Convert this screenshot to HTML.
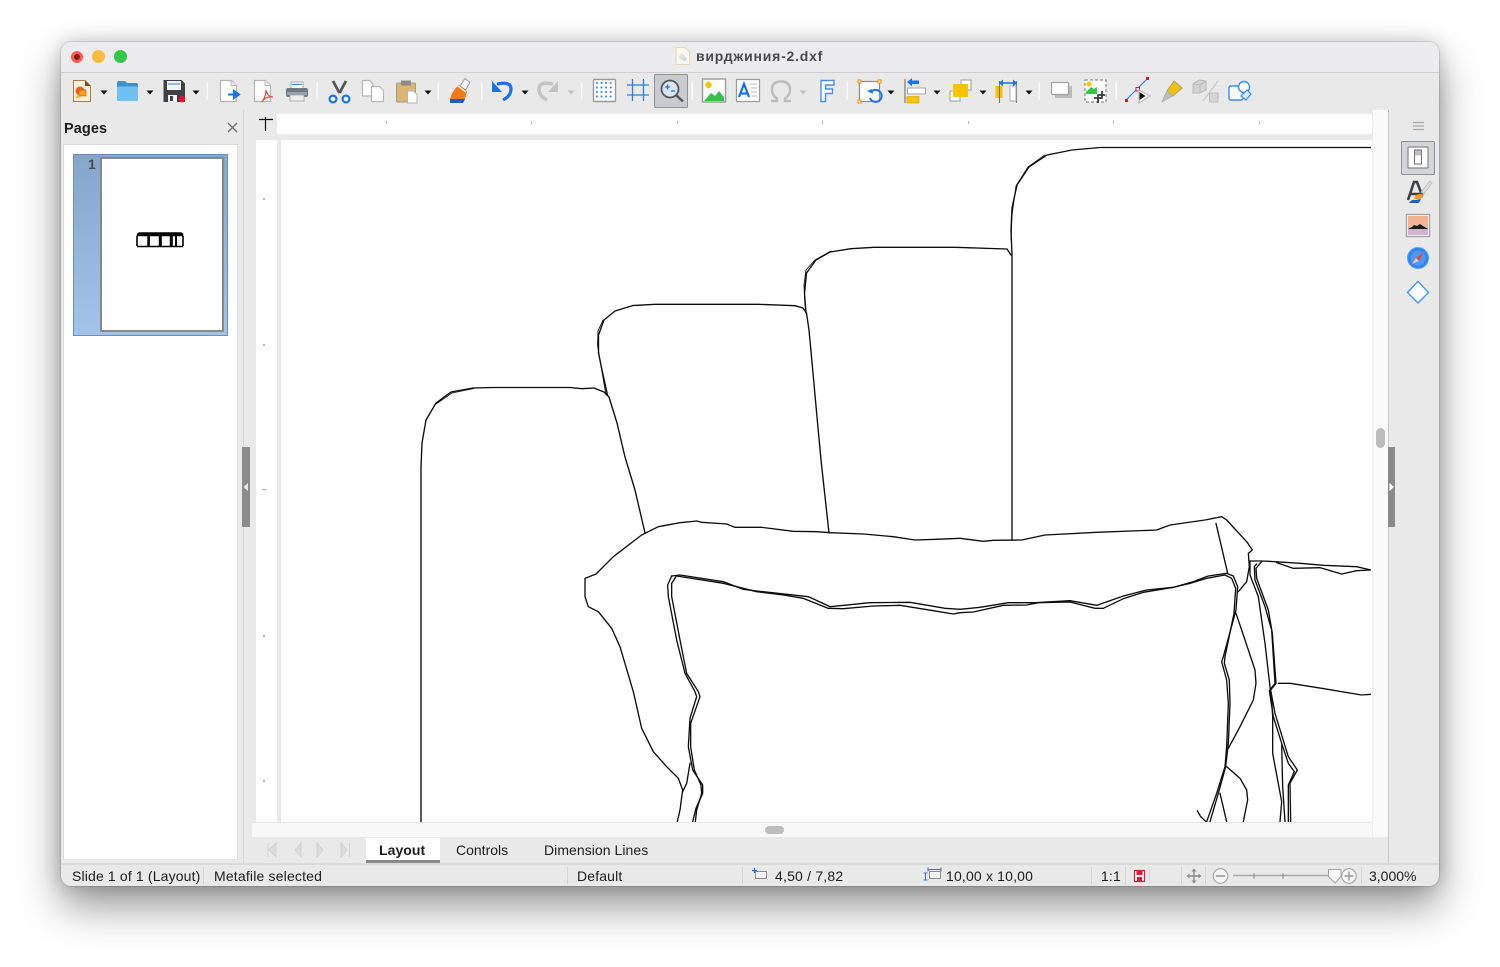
<!DOCTYPE html>
<html lang="ru"><head><meta charset="utf-8"><title>вирджиния-2.dxf</title>
<style>
html,body{margin:0;padding:0;width:1500px;height:967px;background:#fff;overflow:hidden}
body{position:relative;font-family:"Liberation Sans",sans-serif;color:#1c1c1c}
.a{position:absolute}
.t{position:absolute;white-space:nowrap;font-size:14px;line-height:16px;color:#1c1c1c;letter-spacing:.15px}
#win{position:absolute;left:61px;top:42px;width:1378px;height:844px;border-radius:10px;background:#e9e9e9;box-shadow:0 20px 42px rgba(0,0,0,.42),0 0 18px rgba(0,0,0,.18),0 0 0 1px rgba(0,0,0,.1)}
svg{position:absolute;left:0;top:0}
</style></head><body>
<div id="win"></div>
<div class="a" style="left:61px;top:42px;width:1378px;height:30px;background:#ececee;border-radius:10px 10px 0 0"></div>
<div class="a" style="left:61px;top:72px;width:1378px;height:1px;background:#d0d0d0"></div>
<div class="a" style="left:71px;top:51px;width:12px;height:12px;border-radius:50%;background:#fc5c57"></div>
<div class="a" style="left:74px;top:54px;width:6px;height:6px;border-radius:50%;background:#8a1a14"></div>
<div class="a" style="left:92px;top:50px;width:13px;height:13px;border-radius:50%;background:#fdbb40"></div>
<div class="a" style="left:114px;top:50px;width:13px;height:13px;border-radius:50%;background:#33c748"></div>
<div class="t" style="left:696px;top:48px;font-weight:bold;color:#4a4a4a;letter-spacing:.78px">вирджиния-2.dxf</div>

<!-- left panel -->
<div class="a" style="left:243px;top:110px;width:1px;height:754px;background:#d4d4d4"></div>
<div class="t" style="left:64px;top:121px;font-weight:bold;font-size:14.5px;letter-spacing:.1px">Pages</div>
<div class="a" style="left:63px;top:144px;width:175px;height:716px;background:#fff;border:1px solid #dcdcdc;border-bottom:1px solid #e4e4e4;box-sizing:border-box"></div>
<div class="a" style="left:73px;top:154px;width:155px;height:182px;box-sizing:border-box;border:1px solid #6f8fb8;background:linear-gradient(#86a5cb,#a4c3e9)"></div>
<div class="a" style="left:100px;top:157px;width:124px;height:175px;box-sizing:border-box;background:#fff;border:2px solid #86888a;border-radius:1px"></div>
<div class="t" style="left:88px;top:156px;font-weight:bold;color:#454a52">1</div>

<!-- canvas area -->
<div class="a" style="left:277px;top:114px;width:1095px;height:20px;background:#fff"></div>
<div class="a" style="left:256px;top:140px;width:21px;height:682px;background:#fff"></div>
<div class="a" style="left:281px;top:140px;width:1091px;height:682px;background:#fff"></div>
<div class="a" style="left:1372px;top:110px;width:16px;height:727px;background:#fafafa;border-left:1px solid #eee;box-sizing:border-box"></div>
<div class="a" style="left:252px;top:822px;width:1120px;height:15px;background:#f8f8f8;border-top:1px solid #e6e6e6;box-sizing:border-box"></div>
<div class="a" style="left:1376px;top:428px;width:9px;height:20px;border-radius:4.5px;background:#bdbdbd"></div>
<div class="a" style="left:765px;top:826px;width:19px;height:8px;border-radius:4px;background:#bdbdbd"></div>
<div class="a" style="left:1388px;top:110px;width:1px;height:754px;background:#c9c9c9"></div>
<div class="a" style="left:242px;top:447px;width:8px;height:80px;background:#8b8b8b"></div>
<div class="a" style="left:1388px;top:447px;width:7px;height:80px;background:#8b8b8b"></div>

<!-- tabs + status -->
<div class="a" style="left:366px;top:838px;width:74px;height:25px;background:#fff;border-bottom:3px solid #8a8a8a;box-sizing:border-box"></div>
<div class="t" style="left:379px;top:842px;font-weight:bold;letter-spacing:.05px">Layout</div>
<div class="t" style="left:456px;top:842px;letter-spacing:0">Controls</div>
<div class="t" style="left:544px;top:842px;letter-spacing:.05px">Dimension Lines</div>
<div class="a" style="left:61px;top:863px;width:1378px;height:2px;background:#dadada"></div>
<div class="t" style="left:72px;top:868px">Slide 1 of 1 (Layout)</div>
<div class="t" style="left:214px;top:868px;letter-spacing:.18px">Metafile selected</div>
<div class="t" style="left:577px;top:868px">Default</div>
<div class="t" style="left:775px;top:868px;letter-spacing:.2px">4,50 / 7,82</div>
<div class="t" style="left:946px;top:868px;letter-spacing:.17px">10,00 x 10,00</div>
<div class="t" style="left:1101px;top:868px">1:1</div>
<div class="t" style="left:1369px;top:868px;letter-spacing:0">3,000%</div>

<!-- drawing -->
<svg width="1500" height="967" viewBox="0 0 1500 967">
<defs><clipPath id="c"><rect x="281" y="140" width="1090" height="682"/></clipPath></defs>
<g clip-path="url(#c)" fill="none" stroke="#0c0c0c" stroke-width="1.35" stroke-linejoin="round" stroke-linecap="round">
<polyline points="421,823 421,467 422,443 426,420 436,403 451,392 473,388 493,387.5 570,387.5 582,388.7 594,388 604,392 609,397 617,423 625,457 635,490 645,533"/>
<polyline points="436,404 452,393 474,388.5" stroke-width=".8"/>
<polyline points="607.5,395 602,370 598.5,353 598.5,335 604,320 615,311 633,305.5 655,304.3 758,304.3 795,305.7 803,308 806.5,313 809,330 813,373 817,417 821,460 829,533"/>
<polyline points="606,395 601,366 597.5,345 598,331 603,320" stroke-width=".9"/>
<polyline points="806,313 804.5,293 806.5,273 816,260 830,252 851,248.7 874,247.3 955,247.3 1007,249 1011,255"/>
<polyline points="805,306 804,285 806,270 815,260 831,251" stroke-width=".9"/>
<polyline points="1012,540 1012,255 1011,230 1012,208 1017,185 1029,167 1047,155 1072,150 1100,147.5 1372,147.5"/>
<polyline points="1011,240 1012,215 1016,186 1028,167 1045,155" stroke-width=".9"/>

<g transform="translate(570 500) scale(.33333)">
<g stroke-width="4">
<polyline points="322,965 330,930 338,870 325,835 290,800 250,755 215,685 190,575 150,440 125,385 85,335 55,320 45,290 45,235 78,222 130,170 215,105 265,80 330,68 380,63 395,67 470,72 495,82 575,82 670,94 740,95 780,98 880,102 970,110 1035,120 1100,118 1170,115"/>
<polyline points="305,228 330,225 460,245 520,268 560,273 715,290 780,320 900,308 1020,307 1125,325 1170,328"/>
<polyline points="320,228 460,250 560,275 640,285 700,295 775,325 820,326 910,318 990,316 1090,332 1150,342 1170,338"/>
<polyline points="305,228 293,255 295,290 320,420 345,520 375,575 380,590 360,655 355,740 368,810 398,855 398,880 378,925 368,965"/>
<polyline points="318,230 305,250 305,290 330,420 350,520 385,575 390,590 362,670 362,740 373,810 393,855 395,880 380,930 376,965"/>
<polyline points="360,790 350,850 338,875"/>
</g></g>

<g transform="translate(960 500) scale(.33333)">
<g stroke-width="4">
<polyline points="0,115 70,124 100,121 185,120 255,105 410,97 590,90 630,75 735,60 785,50 800,60 860,125 877,150 865,160 868,200 860,245 835,275"/>
<polyline points="0,328 60,322 145,308 225,308 330,302 410,316 490,288 560,270 640,262 700,245 745,228 800,220 820,228 833,260 828,330 790,470 785,485 800,540 805,610 800,740 795,800 770,880 740,965"/>
<polyline points="0,338 40,336 130,316 200,315 235,308 330,306 405,325 430,325 490,296 550,277 640,262 690,250 740,235 795,225 815,235 827,265 822,340 795,470 793,490 808,540 810,610 805,730 797,800 775,880 750,965"/>
<polyline points="768,70 803,220"/>
<polyline points="828,340 850,405 885,510 888,550 880,600 840,680 805,745"/>
<polyline points="800,800 840,835 860,870 863,900 850,965"/>
<polyline points="780,880 800,965"/>
<polyline points="712,932 722,950 738,965"/>
<polyline points="870,183 905,183 945,185 1020,190 1090,196 1190,200 1233,210"/>
<polyline points="950,188 1000,205 1080,203 1145,222 1190,212 1233,210"/>
<polyline points="870,183 870,225 895,290 915,430 930,560 935,600 938,650 938,760 965,905 960,965"/>
<polyline points="905,185 888,205 890,235 925,330 937,400 948,550 932,570 945,640 985,770 1012,810 990,850 992,965"/>
<polyline points="890,192 883,200 885,240 915,320 935,390 945,550 928,572 940,650 965,730 985,790 1003,815 985,855 985,965"/>
<polyline points="965,735 968,860 975,965"/>
<polyline points="955,550 990,550 1085,565 1205,585 1233,583"/>
</g></g>
</g>

<!-- thumbnail drawing -->
<g fill="none" stroke="#000" stroke-width="1.6">
<path d="M137 246.500H183M137 246V236M149 246V236M161 246V236M172 246V236M183 246V236"/>
<path d="M137 234.500q1-2 3-2H180q3 0 3 2v1.500H137z" fill="#000" stroke="#000" stroke-width=".6"/>
<path d="M148.500 234V246M160 234V246M171 234V246" stroke-width="2.400"/>
<path d="M176 236V246" stroke-width="2"/>
</g>

<!-- rulers -->
<g fill="#b4b4b4">
<rect x="386" y="121" width="1" height="3"/><rect x="531" y="121" width="1" height="3"/><rect x="677" y="121" width="1" height="3"/><rect x="822" y="121" width="1" height="3"/><rect x="968" y="121" width="1" height="3"/><rect x="1113" y="121" width="1" height="3"/><rect x="1259" y="121" width="1" height="3"/>
<rect x="263" y="198" width="2" height="2"/><rect x="263" y="344" width="2" height="2"/><rect x="262" y="489" width="5" height="1"/><rect x="263" y="635" width="2" height="2"/><rect x="263" y="780" width="2" height="2"/>
</g>
<path d="M259 119.500H273M265.500 117V131" stroke="#111" stroke-width="1.200" fill="none"/>
<path d="M248 483L243.500 487L248 491Z" fill="#e8e8e8"/>
<path d="M1389.500 483L1394 487L1389.500 491Z" fill="#fff"/>
<path d="M228 123L237 132M237 123L228 132" stroke="#6b6b6b" stroke-width="1.300" fill="none"/>

<!-- title doc icon -->
<path d="M676 47.500H685L689.500 52V64.500H676Z" fill="#fbf7ea" stroke="#e4d9b5"/>
<circle cx="682" cy="57" r="3" fill="#dfe3e6"/><circle cx="684.500" cy="59" r="2.200" fill="#c4dcee"/>

<!-- separators -->
<g fill="#f9f9f9">
<rect x="206.500" y="82" width="1.500" height="18"/><rect x="316.500" y="82" width="1.500" height="18"/><rect x="437.500" y="82" width="1.500" height="18"/><rect x="481" y="82" width="1.500" height="18"/><rect x="581" y="82" width="1.500" height="18"/><rect x="691.500" y="82" width="1.500" height="18"/><rect x="846.500" y="82" width="1.500" height="18"/><rect x="1038.500" y="82" width="1.500" height="18"/><rect x="1115.500" y="82" width="1.500" height="18"/>
</g>
<!-- dropdown arrows -->
<g fill="#111">
<path d="M100.500 90.500h7l-3.500 4z"/><path d="M146.500 90.500h7l-3.500 4z"/><path d="M192.500 90.500h7l-3.500 4z"/><path d="M424.500 90.500h7l-3.500 4z"/><path d="M521.500 90.500h7l-3.500 4z"/><path d="M887.500 90.500h7l-3.500 4z"/><path d="M933.500 90.500h7l-3.500 4z"/><path d="M979.500 90.500h7l-3.500 4z"/><path d="M1025.500 90.500h7l-3.500 4z"/>
<path d="M567.500 90.500h7l-3.500 4z" fill="#c4c4c4"/><path d="M799.500 90.500h7l-3.500 4z" fill="#c4c4c4"/>
</g>

<!-- new -->
<path d="M73.500 80.500H85L90.500 86V101.500H73.500Z" fill="#fff0dc" stroke="#a87a4c"/>
<path d="M85 80.500L90.500 86H85Z" fill="#7b4a1e"/>
<circle cx="80" cy="91" r="4.500" fill="#e9601e"/><rect x="79" y="90" width="7" height="6" fill="#f4a21f" stroke="#c55b12" stroke-width=".7"/><path d="M75 98l3-4 3 4z" fill="#f3bd3f"/>
<!-- folder -->
<path d="M117 83q0-2 2-2h6l2 2h9q2 0 2 2v14q0 2-2 2h-17q-2 0-2-2z" fill="#3f8fc8"/><rect x="117" y="86.500" width="21" height="14.500" rx="1.500" fill="#70c0f3"/>
<!-- save -->
<path d="M163.500 80h18l3.500 3.500V102h-21.500z" fill="#3f4246"/><rect x="167" y="81" width="14" height="9" fill="#f4f4f4"/><path d="M168 84h12" stroke="#4f93e0" stroke-width="1.200"/><rect x="168" y="95" width="9" height="7" fill="#f4f4f4"/><rect x="170" y="96" width="3" height="5" fill="#3f4246"/><circle cx="182" cy="99" r="3.200" fill="#e8112d"/>
<!-- export -->
<path d="M220.500 80.500h11l5 5V101.500h-16z" fill="#fff" stroke="#b4b4b4" stroke-width="1.200"/><path d="M231 80.500v5h5.500" fill="#eee" stroke="#b4b4b4"/><path d="M228 94.500h6M234 91l5 3.500-5 3.500z" stroke="#1a73e8" stroke-width="2" fill="#1a73e8"/>
<!-- pdf -->
<path d="M254.500 80.500h11l5 5V101.500h-16z" fill="#fff" stroke="#b4b4b4" stroke-width="1.200"/><path d="M265 80.500v5h5.500" fill="#eee" stroke="#b4b4b4"/><path d="M262 102c3-4 4-8 4-12 1 4 3 7 7 7-4-1-9 1-11 5z" fill="none" stroke="#e0483e" stroke-width="1.200"/>
<!-- print -->
<rect x="291" y="82" width="12" height="7" fill="#fff" stroke="#888" stroke-width=".7"/><rect x="286" y="88" width="22" height="9" rx="2" fill="#6f7a86"/><rect x="287" y="92" width="20" height="3" fill="#9aa4ae"/><rect x="290" y="95" width="14" height="6" fill="#eee" stroke="#999" stroke-width=".7"/><path d="M292 84.500h10" stroke="#3a8ae0" stroke-width="1.200"/>
<!-- cut -->
<path d="M333 81l6.500 12M346 81l-6.500 12" stroke="#53585e" stroke-width="2.800" fill="none"/><circle cx="333" cy="99" r="3.400" fill="#fff" stroke="#1a73e8" stroke-width="2.200"/><circle cx="346" cy="99" r="3.400" fill="#fff" stroke="#1a73e8" stroke-width="2.200"/>
<!-- copy -->
<path d="M362.500 80.500h7l3.500 3.500v12h-10.500z" fill="#fff" stroke="#b5b5b5" stroke-width="1.200"/><path d="M371.500 86.500h8l4 4V101.500h-12z" fill="#fff" stroke="#b5b5b5" stroke-width="1.200"/>
<!-- paste -->
<rect x="396.500" y="83" width="19" height="19" rx="1" fill="#dcb56f" stroke="#a89a80"/><rect x="401" y="80.500" width="10" height="5" fill="#8c8c8c"/><path d="M407.500 91h6l3.500 3.500V103h-9.500z" fill="#fff" stroke="#b5b5b5"/>
<!-- clear brush -->
<path d="M465 78.500l5 4-4.500 7.500-5.500-4z" fill="#f2f2f2" stroke="#9a9a9a"/><path d="M459 85l8 6-2 8h-15q2-8 9-14z" fill="#f07b16"/><path d="M450 99h15l-2 4h-13z" fill="#1b5fc9"/><path d="M458 86l8 6" stroke="#e4e4e4" stroke-width="1.600"/>
<!-- undo / redo -->
<path d="M497 84q14-3 14 5 0 7-8 11" fill="none" stroke="#1a73e8" stroke-width="3.200"/><path d="M492 81v11h10z" fill="#1a73e8"/>
<path d="M553 84q-14-3-14 5 0 7 8 11" fill="none" stroke="#c4c4c4" stroke-width="3.600"/><path d="M558 81v11h-10z" fill="#c4c4c4"/>
<!-- grid -->
<rect x="593.500" y="79.500" width="22" height="22" rx="1" fill="#fff" stroke="#9a9a9a" stroke-width="1.400"/>
<g stroke="#2f7fe0" stroke-width="1.800" stroke-dasharray="1.800 2.800" fill="none"><path d="M596 83h17M596 87.500h17M596 92h17M596 96.500h17"/></g>
<!-- snap lines -->
<path d="M627 85h22M627 95h22" stroke="#2f7fe0" stroke-width="1.300"/><path d="M632.500 79v22M643.500 79v22" stroke="#2f7fe0" stroke-width="1.300"/>
<!-- zoom pan -->
<rect x="654.500" y="74.500" width="33" height="33" rx="1" fill="#c9cbcf" stroke="#8d9094"/>
<circle cx="670" cy="89" r="8.500" fill="#d9e4ee" stroke="#52565c" stroke-width="1.800"/><path d="M676 95l7 6.500" stroke="#52565c" stroke-width="2.400"/><path d="M665 87h5M667.500 84.500v5M671 91h4" stroke="#1a73e8" stroke-width="1.300"/>
<!-- image -->
<rect x="702.500" y="79" width="23" height="23" fill="#fff" stroke="#9a9a9a" stroke-width="1.400"/><circle cx="708.500" cy="85" r="3.200" fill="#f5c400"/><path d="M704 101l7-8 4 3 4-5 5 6v4z" fill="#34c24a"/>
<!-- textbox -->
<rect x="736.500" y="79.500" width="23" height="22" fill="#fff" stroke="#9a9a9a" stroke-width="1.200"/><path d="M739 97l5-13 5 13M740.500 93.500h7" fill="none" stroke="#1a6fe0" stroke-width="2.200"/><path d="M750 84h7M751 88h6M751 92h6M751 96h6" stroke="#bbb" stroke-width="1"/>
<!-- omega -->
<path d="M771 101h6v-2.500q-5-3-5-9 0-8 9-8t9 8q0 6-5 9v2.500h6" fill="none" stroke="#bcbcbc" stroke-width="2.400"/>
<!-- fontwork -->
<path d="M821 80.500h13v4.500h-8.500v4h7v4.500h-7v8h-4.500z" fill="#fff" stroke="#4a8fe8" stroke-width="1.400"/>
<!-- rotate -->
<rect x="859.500" y="81.500" width="20" height="20" fill="#fff" stroke="#8c8c8c" stroke-width="1.200"/>
<g fill="#fff" stroke="#f29a1f" stroke-width="1.200"><rect x="858" y="80" width="3" height="3"/><rect x="878" y="80" width="3" height="3"/><rect x="858" y="100" width="3" height="3"/></g>
<path d="M871 92a6 6 0 1 1-1 6" fill="none" stroke="#1a73e8" stroke-width="2"/><path d="M867 91l5-2 1 5z" fill="#1a73e8"/>
<!-- align -->
<path d="M905 79v24" stroke="#8c8c8c" stroke-width="1.400"/><path d="M907 82l5-4v2.500h7v3.500h-7v2.500z" fill="#1a73e8"/><rect x="907.500" y="88" width="18" height="6" fill="#fff" stroke="#a5a5a5"/><rect x="907" y="96.500" width="12" height="6.500" fill="#f5c400" stroke="#e0a800" stroke-width=".7"/>
<!-- arrange -->
<rect x="961" y="80" width="10" height="10" fill="#fff" stroke="#a8a8a8" stroke-width="1.200"/><rect x="950" y="91" width="10" height="10" fill="#fff" stroke="#a8a8a8" stroke-width="1.200"/><rect x="953" y="84" width="15" height="13" fill="#f8c400"/>
<!-- distribute -->
<rect x="995.500" y="86" width="7" height="12" fill="#f5c400"/><path d="M999.500 81v22M1016.500 81v22" stroke="#777" stroke-width="1.100"/><rect x="1010" y="86" width="6" height="15" fill="#fff" stroke="#aaa"/><path d="M999 83h18" stroke="#1a73e8" stroke-width="1.500"/><path d="M999 83l4-3.500v7zM1017 83l-4-3.500v7z" fill="#1a73e8"/>
<!-- shadow -->
<rect x="1055" y="86" width="17" height="12" fill="#bcbcbc"/><rect x="1051.500" y="82.500" width="17" height="12" rx="1" fill="#fff" stroke="#a0a0a0" stroke-width="1.200"/>
<!-- crop -->
<rect x="1085" y="80" width="21" height="22" fill="#fff" stroke="#8c8c8c" stroke-width="1.200" stroke-dasharray="3 2"/><rect x="1086" y="81" width="11" height="11" fill="#fff"/><circle cx="1089" cy="84" r="2.500" fill="#f5c400"/><path d="M1086 92l5-5 3 2 3-2v7h-11z" fill="#34c24a"/><path d="M1098 103V95h7M1094 98h8v-7" fill="none" stroke="#3a3a3a" stroke-width="1.800"/>
<!-- points -->
<path d="M1126 100l21-21" stroke="#3f86e6" stroke-width="1.200"/><rect x="1125" y="99" width="3" height="3" fill="#e8112d"/><rect x="1146" y="77" width="3" height="3" fill="#e8112d"/><rect x="1136" y="87.500" width="3.500" height="3.500" fill="#fff" stroke="#e8112d"/><path d="M1139 90l11 6-11 7z" fill="#fff" stroke="#bbb" stroke-width="1.200"/><path d="M1139.500 92l6 4-6 4z" fill="#111"/>
<!-- glue -->
<path d="M1174 81l8 7-9 8-6-5z" fill="#f0c010" stroke="#b8a14e"/><path d="M1167 91l6 5-6 3-5 3 2-5z" fill="#bcbcbc" stroke="#aaa" stroke-width=".7"/>
<!-- extrusion toggle -->
<path d="M1193 84l6-4 7 1v9l-6 3h-7zM1193 84l7 1v8M1200 85l6-4" fill="#d4d4d4" stroke="#bcbcbc" stroke-width="1.100"/><path d="M1218 81l-15 20" stroke="#c9c9c9" stroke-width="1.100"/><rect x="1209.500" y="93" width="8.500" height="9" fill="#d6d6d6" stroke="#bcbcbc"/>
<!-- shapes -->
<rect x="1229" y="86" width="14" height="14" rx="1.500" fill="#fff" stroke="#3d8cf0" stroke-width="1.400"/><circle cx="1244" cy="87" r="5.500" fill="#fff" stroke="#3d8cf0" stroke-width="1.400"/><path d="M1241 96l6-6 4 4-5 6z" fill="#dcebfb" stroke="#3d8cf0" stroke-width="1.200"/>

<!-- sidebar -->
<path d="M1413 122.500h11M1413 126h11M1413 129.500h11" stroke="#a8a8a8" stroke-width="1.200"/>
<rect x="1401.500" y="141.500" width="33" height="33" rx="1" fill="#d4d5d7" stroke="#8d9094"/>
<rect x="1408" y="147" width="20" height="21" rx="1" fill="#fff" stroke="#888" stroke-width="1.200"/><rect x="1414.500" y="150" width="7" height="14" fill="#fff" stroke="#777" stroke-width="1.100"/><rect x="1415" y="150.500" width="6" height="5" fill="#bdbdbd"/>
<path d="M1408 200l6-18h3l5 13M1411 194h9" fill="none" stroke="#3c3f44" stroke-width="2.600"/><path d="M1421 192l9-11 2 2-8 11z" fill="#ddd" stroke="#bbb" stroke-width=".8"/><path d="M1414 199q1-5 6-5 3 0 4 1-1 4-5 4z" fill="#f29a1f"/><path d="M1409 203q3-4 6-3l6-1q-1 3-3 4z" fill="#1a5fd0"/>
<rect x="1406.500" y="214.500" width="23" height="22" fill="#fff" stroke="#a3a3a3" stroke-width="1.400"/>
<defs><linearGradient id="g" x1="0" y1="0" x2="0" y2="1"><stop offset="0" stop-color="#f2b28a"/><stop offset=".55" stop-color="#f0b59c"/><stop offset=".6" stop-color="#d1b2c4"/><stop offset="1" stop-color="#cdb6d0"/></linearGradient></defs>
<rect x="1408" y="216" width="20" height="19" fill="url(#g)"/><path d="M1408 229l4-2 2-2 3 1 3-2 3 2 5 3z" fill="#1d1d1d"/>
<circle cx="1418" cy="258" r="10.500" fill="#2f86ee" stroke="#5aa2f5"/><circle cx="1418" cy="258" r="7.500" fill="#fff" opacity=".15"/><path d="M1424 252l-5 9-3-3z" fill="#e8443c"/><path d="M1412 264l4-6 3 3z" fill="#cfd3d8"/>
<path d="M1418 281.500L1428.500 292.500L1418 303L1407.500 292.500Z" fill="#fff" stroke="#4a9cf5" stroke-width="1.500"/>

<!-- tab nav -->
<g fill="#dcdcdc" stroke="#cfcfcf" stroke-width=".8"><path d="M276 843v14l-7-7zM268 843v14"/><path d="M301 843v14l-6-7z"/><path d="M317 843v14l6-7z"/><path d="M341 843v14l6-7zM349.500 843v14"/></g>

<!-- status separators -->
<g fill="#d5d5d5"><rect x="203" y="867" width="1" height="17"/><rect x="567" y="867" width="1" height="17"/><rect x="742" y="867" width="1" height="17"/><rect x="1091" y="867" width="1" height="17"/><rect x="1125" y="867" width="1" height="17"/><rect x="1149" y="867" width="1" height="17"/><rect x="1181" y="867" width="1" height="17"/><rect x="1205" y="867" width="1" height="17"/><rect x="1361" y="867" width="1" height="17"/></g>
<!-- status icons -->
<rect x="755.500" y="871.500" width="11" height="7" fill="#f4f4f4" stroke="#8d8d8d"/><path d="M752 870.500h5M754.500 868v5" stroke="#1a73e8" stroke-width="1.200"/>
<rect x="929.500" y="871.500" width="11" height="7" fill="#f4f4f4" stroke="#8d8d8d"/><path d="M928 869.500h13M928 867.500v4M941 867.500v4M925.500 873v7M923.500 873h4M923.500 880h4" stroke="#2b78e4" stroke-width="1"/>
<path d="M1134.500 870.500h10v11h-10z" fill="#fff" stroke="#e21b3c" stroke-width="1.200"/><rect x="1136.500" y="871" width="6" height="4" fill="#e21b3c"/><rect x="1137" y="877" width="5" height="4" fill="#e21b3c"/>
<path d="M1194 870v12M1188 876h12" stroke="#8a8a8a" stroke-width="1.400"/><path d="M1194 868.500l-2.500 3h5zM1194 883.500l-2.500-3h5zM1186.500 876l3-2.500v5zM1201.500 876l-3-2.500v5z" fill="#8a8a8a"/>
<circle cx="1220.500" cy="876" r="7.300" fill="#f4f4f4" stroke="#a3a3a3" stroke-width="1.100"/><path d="M1216 876h9" stroke="#888" stroke-width="1.300"/>
<path d="M1233 875.500h96" stroke="#a8a8a8" stroke-width="1.600"/><path d="M1254 873v6M1283 873v6" stroke="#8a8a8a"/>
<path d="M1328.500 869.500h12.500v7l-6 6.500-6.500-6.500z" fill="#fafafa" stroke="#a3a3a3"/>
<circle cx="1349" cy="876" r="7.300" fill="#f4f4f4" stroke="#a3a3a3" stroke-width="1.100"/><path d="M1344.500 876h9M1349 871.500v9" stroke="#888" stroke-width="1.200"/>
</svg>
</body></html>
